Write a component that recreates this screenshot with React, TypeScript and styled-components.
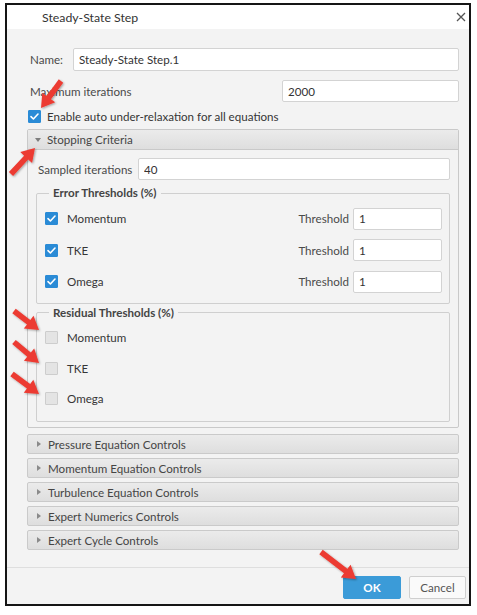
import React from "react";
import styled, { createGlobalStyle } from "styled-components";

const Global = createGlobalStyle`
  html, body { margin: 0; padding: 0; background: #ffffff; }
  body { font-family: Lato, "Open Sans", "Liberation Sans", sans-serif; font-size: 11.6px; color: #3a3a3a; }
  * { box-sizing: border-box; }
`;

const Page = styled.div`
  position: relative;
  width: 477px;
  height: 615px;
  padding: 3px 0 0 5px;
`;

const Frame = styled.div`
  width: 466px;
  height: 603px;
  border: 2px solid #151515;
  background: #f3f3f3;
  display: flex;
  flex-direction: column;
`;

const TitleBar = styled.div`
  height: 24px;
  flex: none;
  background: #ffffff;
  display: flex;
  align-items: center;
  justify-content: space-between;
  padding: 0 2px 0 35px;
  font-size: 12.3px;
  color: #333;
`;

const CloseBtn = styled.span`
  width: 12px;
  height: 12px;
  display: flex;
  align-items: center;
  justify-content: center;
`;

const Body = styled.div`
  flex: 1;
  display: flex;
  flex-direction: column;
  padding: 19px 10px 0 20px;
`;

const FieldRow = styled.div<{ $mt?: number }>`
  display: flex;
  align-items: center;
  margin-top: ${(p) => p.$mt ?? 0}px;
`;

const Label = styled.span<{ $indent?: number }>`
  padding-left: ${(p) => p.$indent ?? 3}px;
  color: #4a4a4a;
  white-space: nowrap;
`;

const TextInput = styled.input<{ $w?: number; $h?: number; $ml?: number }>`
  font-family: inherit;
  font-size: 11.6px;
  color: #333;
  height: ${(p) => p.$h ?? 22}px;
  ${(p) => (p.$w ? `width: ${p.$w}px; flex: none;` : "flex: 1; min-width: 0;")}
  margin-left: ${(p) => (p.$ml === undefined ? "auto" : p.$ml + "px")};
  background: #ffffff;
  border: 1px solid #d3d3d3;
  border-radius: 2px;
  padding: 0 5px;
  outline: none;
`;

const CheckRow = styled.label<{ $mt?: number; $pl?: number }>`
  display: flex;
  align-items: center;
  gap: 6px;
  height: 13px;
  margin-top: ${(p) => p.$mt ?? 0}px;
  padding-left: ${(p) => p.$pl ?? 0}px;
  color: #363636;
`;

const RowText = styled.span<{ $ml?: number }>`
  margin-left: ${(p) => p.$ml ?? 0}px;
`;

const Box = styled.span<{ $checked?: boolean }>`
  width: 13px;
  height: 13px;
  flex: none;
  border-radius: 1px;
  display: flex;
  align-items: center;
  justify-content: center;
  background: ${(p) => (p.$checked ? "#2a8bd6" : "#e4e4e4")};
  border: 1px solid ${(p) => (p.$checked ? "#2a8bd6" : "#cdcdcd")};
`;

const Panel = styled.div`
  margin-top: 6px;
  height: 299px;
  flex: none;
  border: 1px solid #c9c9c9;
  border-radius: 2px;
  display: flex;
  flex-direction: column;
`;

const SectionHeader = styled.div<{ $closed?: boolean }>`
  height: 20px;
  flex: none;
  display: flex;
  align-items: center;
  gap: 6px;
  padding-left: 7px;
  background: linear-gradient(#ebebeb, #dedede);
  color: #454545;
  ${(p) =>
    p.$closed
      ? "border: 1px solid #cacaca; border-radius: 2px;"
      : "border-bottom: 1px solid #c9c9c9;"}
`;

const TriDown = styled.span`
  width: 0;
  height: 0;
  border-left: 3.5px solid transparent;
  border-right: 3.5px solid transparent;
  border-top: 4px solid #7d7d7d;
`;

const TriRight = styled.span`
  width: 0;
  height: 0;
  margin-left: 2px;
  margin-right: 1px;
  border-top: 3.5px solid transparent;
  border-bottom: 3.5px solid transparent;
  border-left: 4px solid #8a8a8a;
`;

const PanelBody = styled.div`
  flex: 1;
  display: flex;
  flex-direction: column;
  padding: 8px 8px 0 8px;
`;

const Group = styled.fieldset<{ $mt: number; $pt: number; $pb: number }>`
  margin: ${(p) => p.$mt}px 0 0 0;
  padding: ${(p) => p.$pt}px 7px ${(p) => p.$pb}px 8px;
  border: 1px solid #cfcfcf;
  border-radius: 2px;
  min-width: 0;
`;

const Legend = styled.legend`
  font-weight: bold;
  color: #444;
  padding: 0 4px;
  margin-left: 4px;
  line-height: 16px;
`;

const GroupRow = styled.div<{ $h: number }>`
  height: ${(p) => p.$h}px;
  display: flex;
  align-items: center;
`;

const ThreshLabel = styled.span`
  margin-left: auto;
  margin-right: 4px;
  color: #4a4a4a;
`;

const Sections = styled.div`
  margin-top: 6px;
  display: flex;
  flex-direction: column;
  gap: 4px;
`;

const Footer = styled.div`
  height: 37px;
  flex: none;
  border-top: 1px solid #dedede;
  display: flex;
  justify-content: flex-end;
  align-items: flex-start;
  gap: 8px;
  padding: 8px 3px 0 0;
`;

const Button = styled.button<{ $primary?: boolean }>`
  font-family: inherit;
  font-size: 11.6px;
  height: 23px;
  width: ${(p) => (p.$primary ? 58 : 57)}px;
  border-radius: 2px;
  cursor: pointer;
  font-weight: ${(p) => (p.$primary ? "bold" : "normal")};
  color: ${(p) => (p.$primary ? "#ffffff" : "#555")};
  background: ${(p) => (p.$primary ? "#3b9bd8" : "#fafafa")};
  border: 1px solid ${(p) => (p.$primary ? "#3b9bd8" : "#cfcfcf")};
`;

const Overlay = styled.svg`
  position: absolute;
  left: 0;
  top: 0;
  pointer-events: none;
`;

const Check = () => (
  <svg width="11" height="11" viewBox="0 0 11 11">
    <path d="M2 5.6 L4.4 8 L9 3" fill="none" stroke="#fff" strokeWidth="1.6" strokeLinecap="round" strokeLinejoin="round" />
  </svg>
);

const CheckBox = ({ checked }: { checked?: boolean }) => <Box $checked={checked}>{checked && <Check />}</Box>;

function arrowPoints(x1: number, y1: number, x2: number, y2: number) {
  const dx = x2 - x1;
  const dy = y2 - y1;
  const len = Math.hypot(dx, dy);
  const ux = dx / len;
  const uy = dy / len;
  const nx = -uy;
  const ny = ux;
  const hl = 13;
  const hw = 8;
  const sw = 2.8;
  const bx = x2 - ux * hl;
  const by = y2 - uy * hl;
  const pts = [
    [x1 + nx * sw, y1 + ny * sw],
    [bx + nx * sw, by + ny * sw],
    [bx + nx * hw, by + ny * hw],
    [x2, y2],
    [bx - nx * hw, by - ny * hw],
    [bx - nx * sw, by - ny * sw],
    [x1 - nx * sw, y1 - ny * sw],
  ];
  return pts.map((p) => p.map((v) => v.toFixed(1)).join(",")).join(" ");
}

const arrows: [number, number, number, number][] = [
  [61, 81, 41, 108],
  [11, 174, 35, 148],
  [14, 311, 39, 330],
  [14, 342, 39, 363],
  [12, 374, 39, 394],
  [321, 552, 356, 579],
];

const rows = ["Momentum", "TKE", "Omega"];
const sections = [
  "Pressure Equation Controls",
  "Momentum Equation Controls",
  "Turbulence Equation Controls",
  "Expert Numerics Controls",
  "Expert Cycle Controls",
];

export default function App() {
  return (
    <Page>
      <Global />
      <Frame>
        <TitleBar>
          <span>Steady-State Step</span>
          <CloseBtn>
            <svg width="10" height="10" viewBox="0 0 10 10">
              <path d="M1 1 L9 9 M9 1 L1 9" stroke="#555" strokeWidth="1.3" />
            </svg>
          </CloseBtn>
        </TitleBar>
        <Body>
          <FieldRow>
            <Label>Name:</Label>
            <TextInput $h={23} $ml={10} defaultValue="Steady-State Step.1" />
          </FieldRow>
          <FieldRow $mt={9}>
            <Label>Maximum iterations</Label>
            <TextInput $w={177} defaultValue="2000" />
          </FieldRow>
          <CheckRow $mt={8} $pl={1}>
            <CheckBox checked />
            <span>Enable auto under-relaxation for all equations</span>
          </CheckRow>
          <Panel>
            <SectionHeader>
              <TriDown />
              <span>Stopping Criteria</span>
            </SectionHeader>
            <PanelBody>
              <FieldRow>
                <Label $indent={2}>Sampled iterations</Label>
                <TextInput $w={312} defaultValue="40" />
              </FieldRow>
              <Group $mt={5} $pt={2} $pb={5}>
                <Legend>Error Thresholds (%)</Legend>
                {rows.map((r) => (
                  <GroupRow key={r} $h={31.5}>
                    <CheckRow>
                      <CheckBox checked />
                      <RowText $ml={3}>{r}</RowText>
                    </CheckRow>
                    <ThreshLabel>Threshold</ThreshLabel>
                    <TextInput $w={89} $ml={0} defaultValue="1" />
                  </GroupRow>
                ))}
              </Group>
              <Group $mt={1} $pt={2} $pb={7}>
                <Legend>Residual Thresholds (%)</Legend>
                {rows.map((r) => (
                  <GroupRow key={r} $h={30.5}>
                    <CheckRow>
                      <CheckBox />
                      <RowText $ml={3}>{r}</RowText>
                    </CheckRow>
                  </GroupRow>
                ))}
              </Group>
            </PanelBody>
          </Panel>
          <Sections>
            {sections.map((s) => (
              <SectionHeader key={s} $closed>
                <TriRight />
                <span>{s}</span>
              </SectionHeader>
            ))}
          </Sections>
        </Body>
        <Footer>
          <Button $primary>OK</Button>
          <Button>Cancel</Button>
        </Footer>
      </Frame>
      <Overlay width="477" height="615" viewBox="0 0 477 615">
        <defs>
          <filter id="sh" x="-20%" y="-20%" width="140%" height="140%">
            <feDropShadow dx="1" dy="1" stdDeviation="0.8" floodColor="#000" floodOpacity="0.35" />
          </filter>
        </defs>
        {arrows.map((a, i) => (
          <polygon key={i} points={arrowPoints(a[0], a[1], a[2], a[3])} fill="#ec3b32" filter="url(#sh)" />
        ))}
      </Overlay>
    </Page>
  );
}
